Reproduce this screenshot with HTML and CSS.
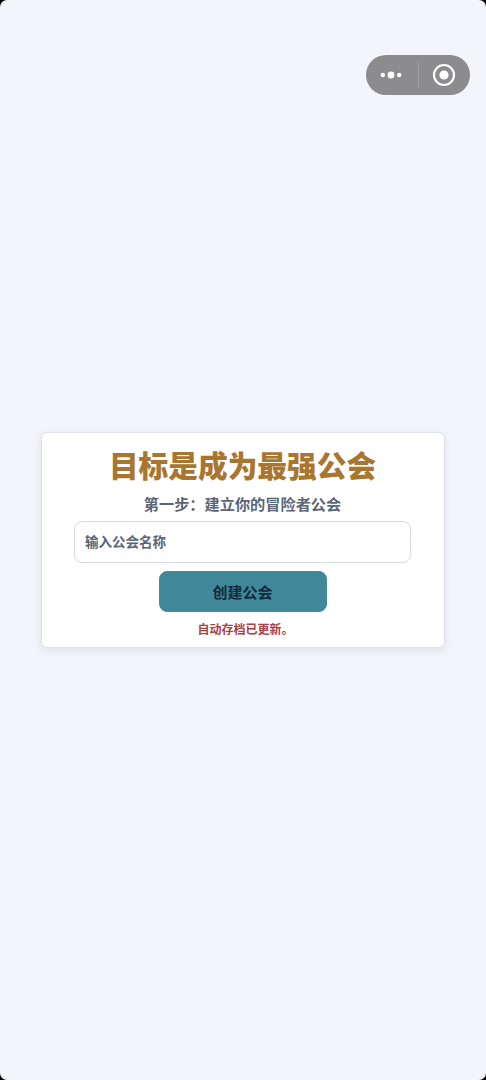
FILE: index.html
```html
<!DOCTYPE html>
<html lang="zh-CN">
<head>
<meta charset="utf-8">
<title>目标是成为最强公会</title>
<link rel="stylesheet" href="styles.css">
</head>
<body>
<main class="page">
  <section class="card">
    <h1 class="title">目标是成为最强公会</h1>
    <h2 class="step">第一步：建立你的冒险者公会</h2>
    <input class="name-input" type="text" placeholder="输入公会名称">
    <button class="create" type="button">创建公会</button>
    <p class="status">自动存档已更新。</p>
  </section>
</main>
<div class="capsule">
  <span class="more">
    <svg width="24" height="10" viewBox="0 0 24 10"><circle cx="2.8" cy="5" r="2.2" fill="#fff"/><circle cx="11" cy="5" r="3.4" fill="#fff"/><circle cx="19.2" cy="5" r="2.2" fill="#fff"/></svg>
  </span>
  <span class="divider"></span>
  <span class="target">
    <svg width="24" height="24" viewBox="0 0 24 24"><circle cx="12" cy="12" r="10" fill="none" stroke="#fff" stroke-width="2.2"/><circle cx="12" cy="12" r="4.6" fill="#fff"/></svg>
  </span>
</div>
<div class="frame"></div>
</body>
</html>
```
FILE: styles.css
```css
* { box-sizing: border-box; }
html, body { height: 100%; margin: 0; }
body {
  background: #f3f5fa;
  font-family: "Inter", "Noto Sans CJK SC", sans-serif;
  overflow: hidden;
}
.page {
  height: 1080px;
  display: flex;
  align-items: center;
  padding: 0 41px;
}
.card {
  width: 100%;
  height: 216px;
  background: #fff;
  border: 1px solid #dde1e9;
  border-radius: 6px;
  box-shadow: 0 3px 9px rgba(60, 72, 100, 0.11);
  display: flex;
  flex-direction: column;
  align-items: center;
  padding: 11px 33px 0 32px;
}
.title {
  margin: 0;
  font-size: 29.7px;
  line-height: 44px;
  font-weight: 900;
  color: #a8762f;
}
.step {
  margin: 6px 0 0;
  font-size: 15.2px;
  line-height: 22px;
  font-weight: 700;
  color: #5a6578;
}
.name-input {
  width: 100%;
  height: 42px;
  margin-top: 5px;
  padding: 0 10px;
  border: 1px solid #d5d9e1;
  border-radius: 8px;
  background: #fff;
  font: 700 13.5px "Inter", "Noto Sans CJK SC", sans-serif;
  color: #5a6578;
}
.name-input::placeholder { color: #5a6578; opacity: 1; }
.create {
  width: 168px;
  height: 41px;
  margin-top: 8px;
  border: 1px solid #4a8b9d;
  border-radius: 8px;
  background: #40879a;
  font: 700 15px "Inter", "Noto Sans CJK SC", sans-serif;
  color: #14293a;
}
.status {
  margin: 9px 0 0 6px;
  font-size: 12px;
  line-height: 18px;
  font-weight: 700;
  color: #a8424a;
}
.capsule {
  position: fixed;
  left: 366px;
  top: 55px;
  width: 104px;
  height: 40px;
  border-radius: 20px;
  background: #8c8c8f;
  display: flex;
  align-items: center;
}
.more { width: 52px; display: flex; justify-content: center; }
.divider { width: 1px; height: 26px; background: #a0a0a3; }
.target { flex: 1; display: flex; justify-content: center; padding-right: 2px; }
.more svg, .target svg { display: block; }
.frame {
  position: fixed;
  inset: 0;
  border-radius: 7px;
  box-shadow: 0 0 0 10px #000;
  pointer-events: none;
}
```
